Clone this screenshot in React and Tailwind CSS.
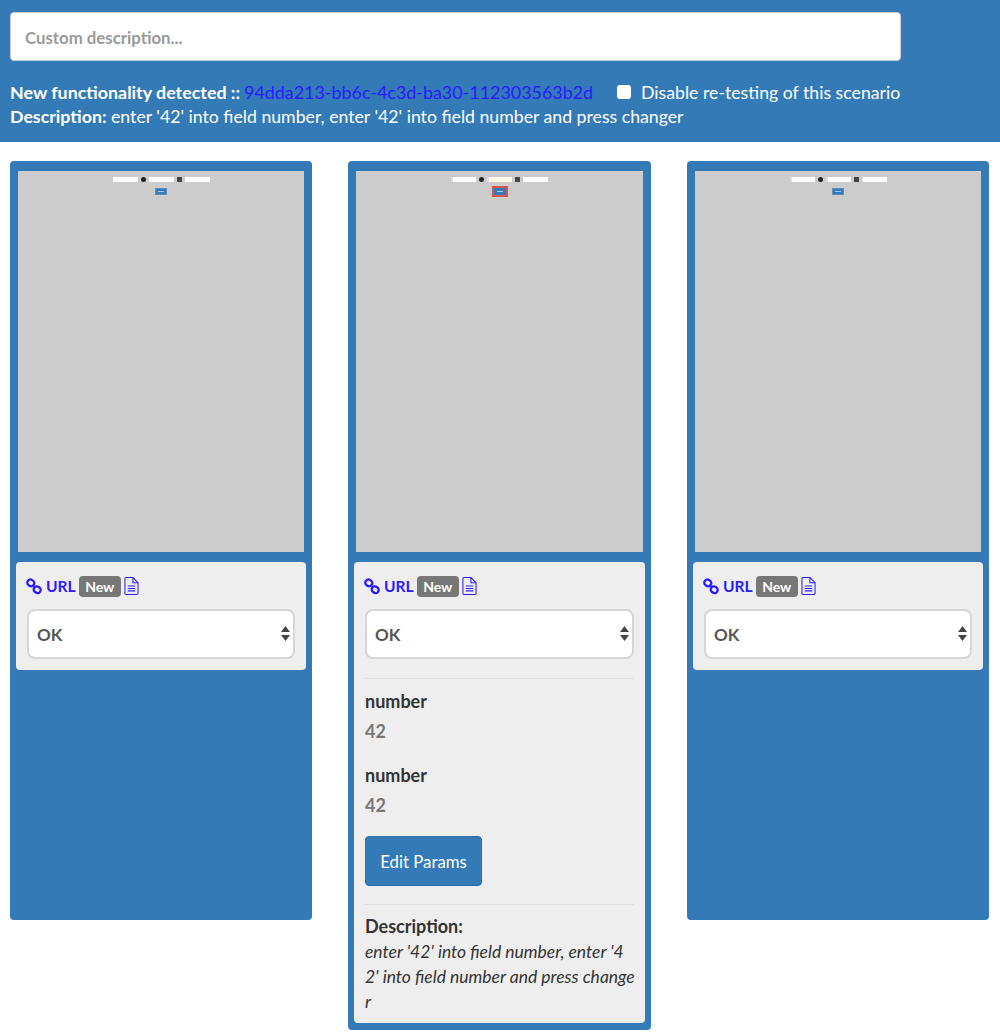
import React from "react";

function LinkIcon() {
  return (
    <svg width="16" height="17" viewBox="0 0 16 17" fill="none" stroke="#2a1aff" strokeWidth="2.3" className="shrink-0 ml-[-1px]">
      <rect x="1.3" y="1.8" width="7" height="6.2" rx="3" transform="rotate(35 4.8 4.9)" />
      <rect x="7.7" y="8.6" width="7" height="6.2" rx="3" transform="rotate(35 11.2 11.7)" />
    </svg>
  );
}

function DocIcon() {
  return (
    <svg width="15" height="20" viewBox="0 0 16 20" fill="none" stroke="#2a1aff" strokeWidth="1.1" className="shrink-0">
      <path d="M1 2.2Q1 1 2.2 1H9.5L15 6.5V17.8Q15 19 13.8 19H2.2Q1 19 1 17.8Z" />
      <path d="M9.5 1V6.5H15" />
      <path d="M4 10H12M4 12.6H12M4 15.2H12" strokeWidth="1.2" />
    </svg>
  );
}

function Mini({ highlight, hints }) {
  return (
    <div className="h-[381px] bg-[#cccccc] flex flex-col items-center pt-[6px]">
      <div className="flex items-center gap-[3px] h-[5px] blur-[0.3px]">
        <div className={`w-[25px] h-[5px] bg-white ${hints ? "border-l-2 border-[#ddd]" : ""}`} />
        <div className="w-[5px] h-[5px] rounded-full bg-[#222]" />
        <div className={`w-[25px] h-[5px] ${highlight ? "bg-[#fff8e8]" : "bg-white"} ${hints ? "border-l-2 border-[#ddd]" : ""}`} />
        <div className="w-[5px] h-[5px] bg-[#444]" />
        <div className={`w-[25px] h-[5px] bg-white ${hints && !highlight ? "border-l border-[#ddd]" : ""}`} />
      </div>
      <div className={`mt-[6px] w-[12px] h-[7px] bg-[#337ab7] flex items-center justify-center blur-[0.3px] ${highlight ? "outline-2 outline-[#d9534f]" : "border border-[#5c8fbd]"}`}>
        <div className="w-[6px] h-px bg-[#a9c6e2]" />
      </div>
    </div>
  );
}

function Panel({ children }) {
  return (
    <div className="mt-[10px] mx-[-2px] bg-[#eeeeee] rounded-[4px] px-[11px] pt-[12px] pb-[11px]">
      <div className="flex items-center h-[24px] text-[#2a1aff] font-bold text-[15.6px]">
        <LinkIcon />
        <span className="ml-[4px]">URL</span>
        <span className="ml-[3px] bg-[#777777] text-white text-[14px] rounded-[4px] h-[21px] w-[42px] flex items-center justify-center">New</span>
        <span className="ml-[3px] flex"><DocIcon /></span>
      </div>
      <div className="relative mt-[11px]">
        <select className="w-full h-[50px] appearance-none bg-white border-2 border-[#d6d6d6] rounded-[8px] pl-[8px] text-[17px] font-bold text-[#555555]" defaultValue="OK">
          <option>OK</option>
        </select>
        <svg width="9" height="15" viewBox="0 0 9 15" className="absolute right-[5px] top-[17px]" fill="#444">
          <path d="M4.5 0L9 6H0Z" />
          <path d="M0 9H9L4.5 15Z" />
        </svg>
      </div>
      {children}
    </div>
  );
}

function Card({ highlight, hints, children, tall }) {
  return (
    <div className={`bg-[#337ab7] rounded-[4px] px-[8px] pt-[10px] ${tall ? "pb-[7px]" : "h-[759px]"}`}>
      <Mini highlight={highlight} hints={hints} />
      <Panel>{children}</Panel>
    </div>
  );
}

export default function App() {
  return (
    <div className="bg-white min-h-[1035px] text-[18px] leading-[25px] text-[#333333]" style={{ fontFamily: '"Lato", "Liberation Sans", sans-serif' }}>
      <header className="bg-[#337ab7] h-[142px] pl-[10px] pt-[12px] text-white">
        <input
          placeholder="Custom description..."
          className="block w-[891px] h-[49px] bg-white rounded-[4px] border border-[#cccccc] px-[14px] pt-[1px] text-[16.8px] font-bold text-[#555] placeholder:text-[#999999] outline-none"
        />
        <div className="mt-[18px] flex items-center h-[25px] text-[17.7px] pt-[1px]">
          <span className="font-bold text-[17.85px]">New functionality detected ::</span>
          <a className="ml-[4px] text-[#2a1aff] font-normal text-[17.9px]">94dda213-bb6c-4c3d-ba30-112303563b2d</a>
          <input type="checkbox" className="ml-[24px] w-[14px] h-[14px] appearance-none bg-white rounded-[3px]" />
          <span className="ml-[10px]">Disable re-testing of this scenario</span>
        </div>
        <div className="h-[25px] text-[17.68px]">
          <span className="font-bold text-[17.75px]">Description:</span> enter '42' into field number, enter '42' into field number and press changer
        </div>
      </header>
      <main className="grid grid-cols-[302px_303px_302px] gap-[36px] px-[10px] pt-[19px] items-start">
        <Card />
        <Card tall highlight hints>
          <hr className="mt-[19px] border-t border-[#e0e0e0]" />
          <div className="mt-[10px] font-bold h-[25px]">number</div>
          <div className="mt-[5px] font-bold text-[#777777] h-[25px]">42</div>
          <div className="mt-[19px] font-bold h-[25px]">number</div>
          <div className="mt-[5px] font-bold text-[#777777] h-[25px]">42</div>
          <button className="mt-[18px] block w-[117px] h-[50px] bg-[#337ab7] border border-[#2e6da4] rounded-[4px] text-white text-[16.8px]">Edit Params</button>
          <hr className="mt-[18px] border-t border-[#e0e0e0]" />
          <div className="mt-[9px] font-bold">Description:</div>
          <div className="italic whitespace-nowrap text-[17.5px] mb-[-2px]">
            enter '42' into field number, enter '4<br />2' into field number and press change<br />r
          </div>
        </Card>
        <Card hints />
      </main>
    </div>
  );
}
